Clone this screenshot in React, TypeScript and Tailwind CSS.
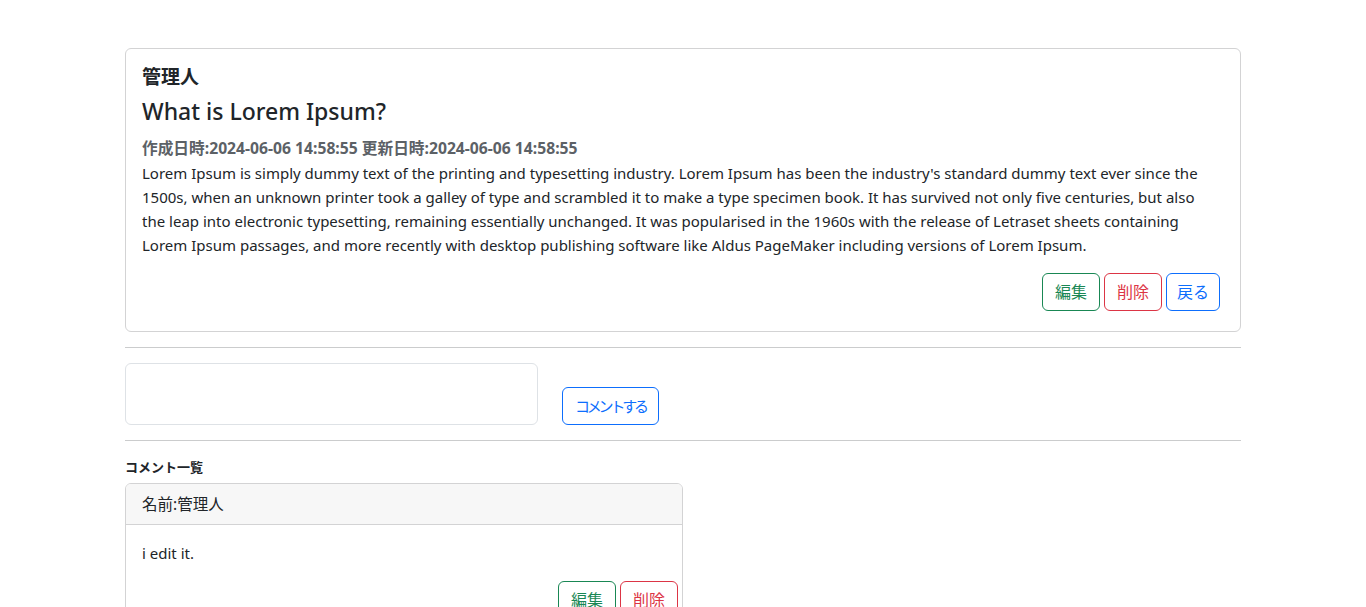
import React from "react";

const body =
  "Lorem Ipsum is simply dummy text of the printing and typesetting industry. Lorem Ipsum has been the industry's standard dummy text ever since the 1500s, when an unknown printer took a galley of type and scrambled it to make a type specimen book. It has survived not only five centuries, but also the leap into electronic typesetting, remaining essentially unchanged. It was popularised in the 1960s with the release of Letraset sheets containing Lorem Ipsum passages, and more recently with desktop publishing software like Aldus PageMaker including versions of Lorem Ipsum.";

function OutlineButton({
  color,
  narrow,
  children,
}: {
  color: "green" | "red" | "blue";
  narrow?: boolean;
  children: React.ReactNode;
}) {
  const cls =
    color === "green"
      ? "border-[#198754] text-[#198754]"
      : color === "red"
      ? "border-[#dc3545] text-[#dc3545]"
      : "border-[#0d6efd] text-[#0d6efd]";
  return (
    <button
      className={
        "h-[38px] rounded-[6px] border bg-white text-[16px] leading-6 " + (narrow ? "px-[10px] " : "px-3 ") + cls
      }
    >
      {children}
    </button>
  );
}

export default function App() {
  return (
    <div
      className="min-h-screen bg-white text-[#212529]"
      style={{ fontFamily: '"Noto Sans", "Noto Sans CJK JP", sans-serif' }}
    >
      <div className="w-[1116px] mx-auto pt-12">
        <div className="border border-[#d3d3d4] rounded-[6px] px-4 pt-4 pb-5">
          <h5 className="text-[19px] font-bold leading-6">管理人</h5>
          <h4 className="text-[23px] font-medium leading-[28px] mt-2">What is Lorem Ipsum?</h4>
          <h6 className="text-[15.7px] font-bold text-[#5c6166] leading-6 mt-[11px]">
            作成日時:2024-06-06 14:58:55 更新日時:2024-06-06 14:58:55
          </h6>
          <p className="text-[15px] leading-6 pr-4 mt-[1px]">{body}</p>
          <div className="flex justify-end gap-1 mt-4 pr-1">
            <OutlineButton color="green">編集</OutlineButton>
            <OutlineButton color="red">削除</OutlineButton>
            <OutlineButton color="blue" narrow>
              戻る
            </OutlineButton>
          </div>
        </div>

        <hr className="my-[15px] border-t border-[#cbcccd]" />

        <div className="flex items-end gap-6">
          <textarea className="w-[413px] h-[62px] border border-[#dee2e6] rounded-[6px] resize-none" />
          <OutlineButton color="blue">
            <span className="text-[15px] tracking-[-3.2px]">コメントする</span>
          </OutlineButton>
        </div>

        <hr className="mt-[15px] mb-4 border-t border-[#cbcccd]" />

        <div className="text-[13px] font-bold leading-5">コメント一覧</div>
        <div className="w-[558px] mt-[6px] border border-[#d3d3d4] rounded-t-[6px] overflow-hidden">
          <div className="bg-[#f7f7f7] border-b border-[#d3d3d4] px-4 py-2 text-[15.5px] leading-6">名前:管理人</div>
          <div className="pl-4 pr-1 pt-4">
            <p className="text-[15px] leading-6">i edit it.</p>
            <div className="flex justify-end gap-1 mt-4">
              <OutlineButton color="green">編集</OutlineButton>
              <OutlineButton color="red">削除</OutlineButton>
            </div>
          </div>
        </div>
      </div>
    </div>
  );
}
